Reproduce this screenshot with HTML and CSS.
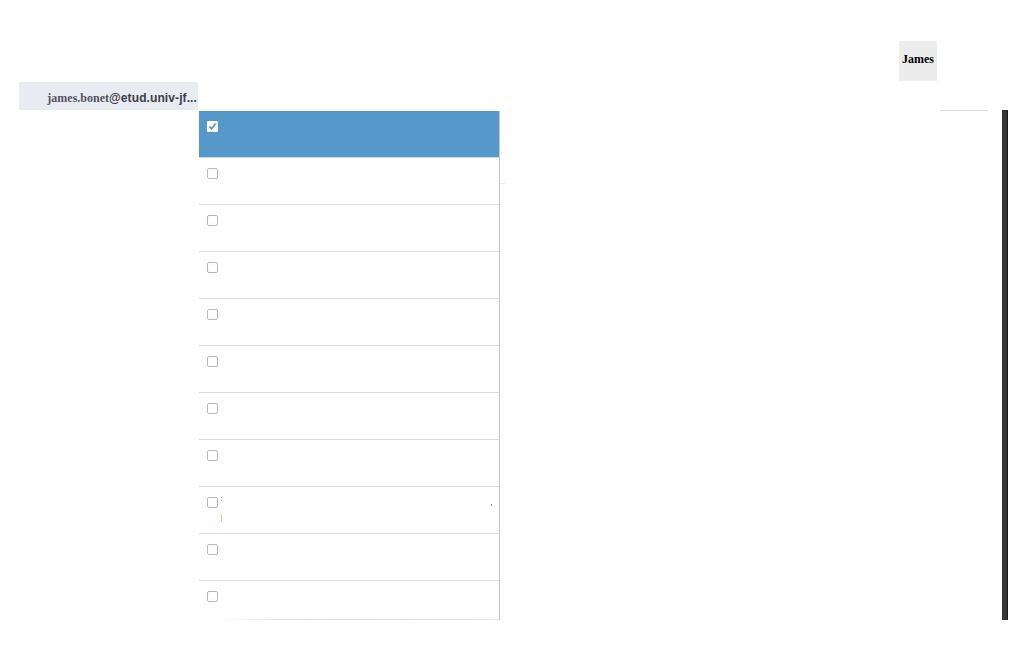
FILE: index.html
```
<!DOCTYPE html>
<html>
<head>
<meta charset="utf-8">
<link rel="stylesheet" href="styles.css">
</head>
<body>
<div class="top">
  <div class="user-box">James</div>
</div>
<div class="bar-row">
  <div class="email"><span class="e-name">james.bonet</span><span class="e-domain">@etud.univ-jf...</span></div>
  <div class="rule"></div>
</div>
<div class="main">
  <ul class="list">
    <li class="item selected"><span class="cb checked"><svg viewBox="0 0 11 11" width="11" height="11"><path d="M2.5 5.6 L4.6 7.8 L8.6 2.6" fill="none" stroke="#4f8fd0" stroke-width="1.6"/></svg></span></li>
    <li class="item"><span class="cb"></span><span class="more">...</span></li>
    <li class="item"><span class="cb"></span></li>
    <li class="item"><span class="cb"></span></li>
    <li class="item"><span class="cb"></span></li>
    <li class="item"><span class="cb"></span></li>
    <li class="item"><span class="cb"></span></li>
    <li class="item"><span class="cb"></span></li>
    <li class="item"><span class="cb"></span><span class="flag-dots"></span><span class="flag-line"></span><span class="tiny-dot"></span></li>
    <li class="item"><span class="cb"></span></li>
    <li class="item last"><span class="cb"></span></li>
  </ul>
  <div class="scroll"></div>
</div>
</body>
</html>
```
FILE: styles.css
```
html, body {
  margin: 0;
  padding: 0;
  background: #fff;
  width: 1028px;
  height: 662px;
  overflow: hidden;
}
.top {
  height: 82px;
  display: flex;
  justify-content: flex-end;
  align-items: flex-start;
  padding-right: 91px;
  box-sizing: border-box;
  padding-top: 41px;
}
.user-box {
  width: 38px;
  height: 40px;
  box-sizing: border-box;
  padding-bottom: 4px;
  background: #ececec;
  display: flex;
  align-items: center;
  justify-content: center;
  font-family: "Liberation Serif", serif;
  font-weight: bold;
  font-size: 12px;
  color: #000;
}
.bar-row {
  height: 29px;
  display: flex;
  align-items: flex-start;
}
.email {
  margin-left: 19px;
  width: 179px;
  height: 28px;
  background: #e9ebf2;
  display: flex;
  align-items: center;
  justify-content: flex-end;
  padding-right: 1px;
  box-sizing: border-box;
  font-size: 12px;
  font-weight: bold;
  white-space: nowrap;
  padding-top: 4px;
}
.e-name {
  font-family: "Liberation Serif", serif;
  color: #55525e;
}
.e-domain {
  font-family: "Liberation Sans", sans-serif;
  font-weight: bold;
  color: #3e3d48;
  letter-spacing: 0.1px;
}
.rule {
  margin-left: auto;
  margin-right: 40px;
  width: 48px;
  height: 1px;
  background: #dddddd;
  align-self: flex-end;
}
.main {
  display: flex;
  align-items: flex-start;
  height: 509px;
}
.list {
  list-style: none;
  margin: 0 0 0 199px;
  padding: 0;
  width: 301px;
  height: 509px;
  box-sizing: border-box;
  border-right: 1px solid #c6c6cf;
}
.item {
  position: relative;
  height: 47px;
  box-sizing: border-box;
  border-bottom: 1px solid #dcdce3;
  padding: 10px 0 0 8px;
}
.item.selected {
  background: #5598c9;
  border-bottom-color: #c9d6e4;
}
.item.last {
  border-bottom: 1px solid transparent;
  border-image: linear-gradient(to right, #fff 0, #fff 7%, #e4e4e8 25%, #d8d8de 50%, #e8e8ec 100%) 1;
  height: 39px;
}
.cb {
  display: block;
  width: 11px;
  height: 11px;
  box-sizing: border-box;
  border: 1px solid #b8b8bc;
  border-radius: 2px;
  background: #fff;
}
.cb.checked {
  border: none;
  background: #fbfcfe;
  border-radius: 1px;
}
.cb svg {
  display: block;
}
.more {
  position: absolute;
  left: 301px;
  top: 20px;
  font-family: "Liberation Sans", sans-serif;
  font-size: 7px;
  line-height: 8px;
  color: #c8c8c8;
}
.flag-dots {
  position: absolute;
  left: 22px;
  top: 10px;
  width: 1px;
  height: 4px;
  background: linear-gradient(#e8a860 0, #e8a860 1px, transparent 1px, transparent 3px, #e8a860 3px);
}
.flag-line {
  position: absolute;
  left: 22px;
  top: 27px;
  width: 1px;
  height: 8px;
  background: #f5c87c;
}
.tiny-dot {
  position: absolute;
  left: 292px;
  top: 17px;
  width: 1px;
  height: 2px;
  background: #6f8fb0;
}
.scroll {
  margin-left: auto;
  margin-right: 20px;
  margin-top: -1px;
  width: 6px;
  height: 510px;
  background: linear-gradient(to right, #363636 0, #363636 5px, #1a1a1a 5px);
}
```
